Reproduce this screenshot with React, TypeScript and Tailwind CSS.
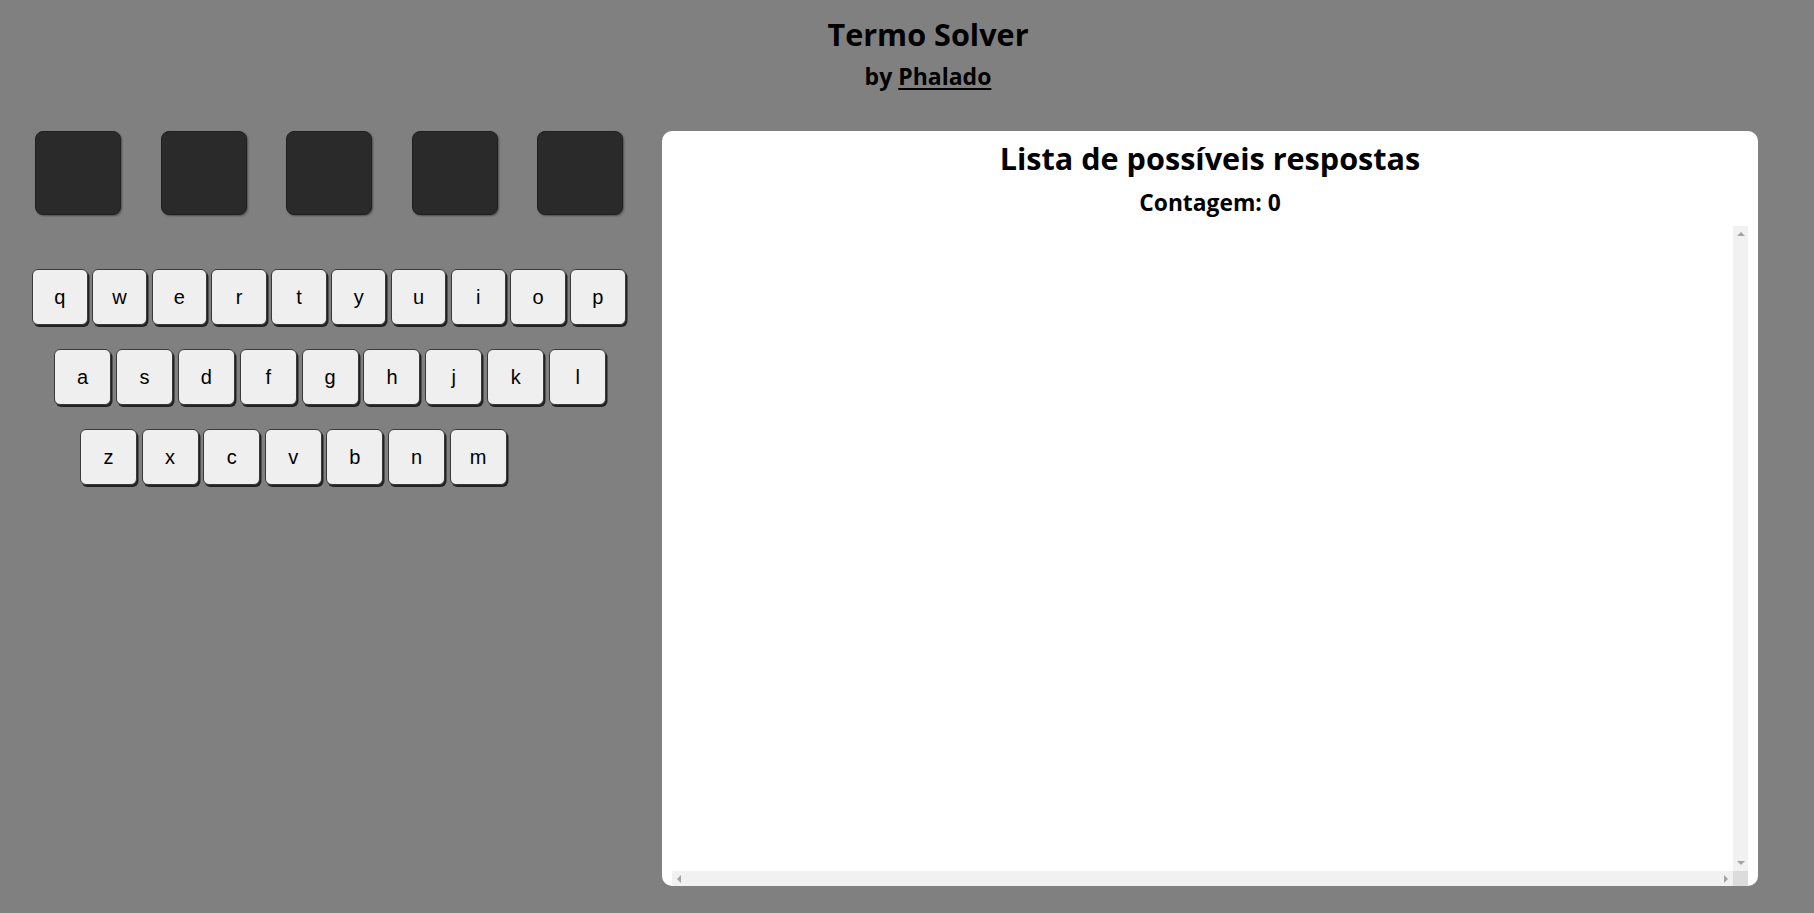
import React from 'react';

const rows = [
  { keys: 'qwertyuiop'.split(''), indent: 'ml-0', key: 'w-[55.5px]', gap: 'gap-[4.3px]' },
  { keys: 'asdfghjkl'.split(''), indent: 'ml-[22px]', key: 'w-[57px]', gap: 'gap-[4.9px]' },
  { keys: 'zxcvbnm'.split(''), indent: 'ml-[48px]', key: 'w-[57px]', gap: 'gap-[4.6px]' },
];

function Tile() {
  return (
    <div className="w-[86px] h-[84px] rounded-[8px] bg-[#2a2a2a] border border-[#202020] shadow-[1px_1px_2px_rgba(0,0,0,0.4)]" />
  );
}

function Key({ letter, width }: { letter: string; width: string }) {
  return (
    <button
      className={`${width} h-[56px] rounded-[6px] bg-[#efefef] border border-[#3a3a3a] shadow-[1.5px_2px_0_#222] flex items-center justify-center text-[20px] text-black font-['Liberation_Sans',Arial,sans-serif]`}
    >
      {letter}
    </button>
  );
}

function Arrow({ dir }: { dir: 'up' | 'down' | 'left' | 'right' }) {
  const pts = {
    up: '0,5 4,1 8,5',
    down: '0,1 4,5 8,1',
    left: '5,0 1,4 5,8',
    right: '1,0 5,4 1,8',
  }[dir];
  const vert = dir === 'up' || dir === 'down';
  return (
    <svg width={vert ? 8 : 6} height={vert ? 6 : 8} viewBox={vert ? '0 0 8 6' : '0 0 6 8'}>
      <polygon points={pts} fill="#a3a3a3" />
    </svg>
  );
}

export default function App() {
  return (
    <div className="min-h-screen bg-[#808080] font-['Open_Sans','Noto_Sans',sans-serif] text-black">
      <header className="flex flex-col items-center pl-[42px] pt-[16px]">
        <h1 className="text-[30.6px] leading-[37px] font-bold">Termo Solver</h1>
        <h2 className="mt-[9.5px] text-[23px] leading-[26px] font-bold">
          by <a href="#" className="underline underline-offset-[3px]">Phalado</a>
        </h2>
      </header>

      <main className="flex mt-[42.5px]">
        <section className="w-[662px] pl-[32px] flex flex-col">
          <div className="ml-[3px] flex gap-[39.5px]">
            {Array.from({ length: 5 }).map((_, i) => (
              <Tile key={i} />
            ))}
          </div>

          <div className="mt-[54px] flex flex-col gap-[24px]">
            {rows.map((r, i) => (
              <div key={i} className={`flex ${r.indent} ${r.gap}`}>
                {r.keys.map(k => (
                  <Key key={k} letter={k} width={r.key} />
                ))}
              </div>
            ))}
          </div>
        </section>

        <section className="w-[1096px] h-[755px] bg-white rounded-[10px] px-[10px] pt-[8.5px] flex flex-col">
          <h1 className="text-center text-[30.6px] leading-[37px] font-bold">Lista de possíveis respostas</h1>
          <h3 className="mt-[13px] text-center text-[22.8px] leading-[26px] font-bold">Contagem: 0</h3>
          <div className="mt-[10.5px] flex-1 flex flex-col">
            <div className="flex-1 flex">
              <ul className="flex-1" />
              <div className="w-[15px] bg-[#f1f1f1] flex flex-col items-center justify-between py-[5px]">
                <Arrow dir="up" />
                <Arrow dir="down" />
              </div>
            </div>
            <div className="h-[15px] flex">
              <div className="flex-1 bg-[#f1f1f1] flex items-center justify-between px-[4px]">
                <Arrow dir="left" />
                <Arrow dir="right" />
              </div>
              <div className="w-[15px] bg-[#dcdcdc]" />
            </div>
          </div>
        </section>
      </main>
    </div>
  );
}
